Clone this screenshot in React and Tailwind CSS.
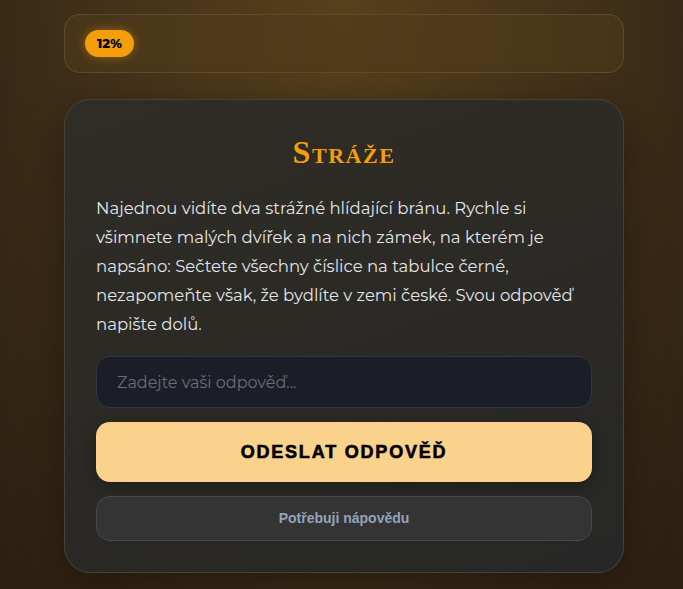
import { useState } from 'react';

export default function App() {
  const [answer, setAnswer] = useState('');

  return (
    <div className="min-h-[589px] w-full bg-[radial-gradient(ellipse_at_50%_0%,#56401c_0%,#45321a_45%,#2a1f11_100%)] font-['Montserrat','Open_Sans',sans-serif]">
      <div className="ml-[64px] flex w-[560px] flex-col gap-[26px] pt-[14px] pb-[17px]">
        {/* progress */}
        <div className="flex h-[59px] items-center rounded-2xl border border-[#6a5432]/70 bg-[#4f3a1b]/60 px-5">
          <span className="flex h-[27px] items-center rounded-full bg-[#f59e0b] px-[12px] text-[13px] font-extrabold text-black shadow-[0_0_10px_rgba(245,158,11,0.45)]">
            12%
          </span>
        </div>

        {/* riddle card */}
        <div className="rounded-[26px] border border-[#46423a] bg-[linear-gradient(160deg,#302d27_0%,#2a2925_60%,#272727_100%)] px-[31px] pt-[34px] pb-[31px] shadow-[0_10px_40px_rgba(0,0,0,0.35)]">
          <h1 className="text-center font-['Liberation_Serif',serif] text-[22px] leading-[36px] font-bold tracking-[0.07em] text-[#f59e0b]">
            <span className="text-[32px]">S</span>TRÁŽE
          </h1>

          <p className="mt-[20px] text-[16.5px] leading-[29px] text-[#e4e4e7]">
            Najednou vidíte dva strážné hlídající bránu. Rychle si všimnete malých dvířek a na nich zámek, na kterém je napsáno: Sečtete všechny číslice na tabulce černé, nezapomeňte však, že bydlíte v zemi české. Svou odpověď napište dolů.
          </p>

          <div className="mt-[17px] flex flex-col gap-[14px]">
            <input
              value={answer}
              onChange={(e) => setAnswer(e.target.value)}
              placeholder="Zadejte vaši odpověď..."
              className="h-[52px] w-full rounded-[14px] border border-[#323643] bg-[#1b1e27] px-5 text-[16px] text-gray-200 outline-none placeholder:text-[#6b6d73]"
            />
            <button className="h-[60px] w-full rounded-[14px] bg-[#fbd28b] font-['Liberation_Sans',sans-serif] text-[18px] font-black tracking-[0.1em] text-black shadow-[0_4px_14px_rgba(0,0,0,0.3)] [-webkit-text-stroke:0.6px_black]">
              ODESLAT ODPOVĚĎ
            </button>
            <button className="h-[45px] w-full rounded-[14px] border border-[#47474a] bg-[#343434] font-['Liberation_Sans',sans-serif] text-[14px] font-bold text-[#94a3b8]">
              Potřebuji nápovědu
            </button>
          </div>
        </div>
      </div>
    </div>
  );
}
